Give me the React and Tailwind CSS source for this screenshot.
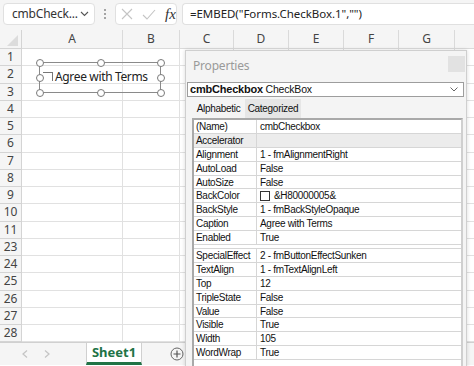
import React from "react";

const rowLabels = ["1","2","3","4","5","6","7","8","9","10","11","23","24","25","26","27","28"];

const colDefs = [
  { l: "A", cls: "w-[101px]" },
  { l: "B", cls: "w-[57px]" },
  { l: "C", cls: "w-[54px]" },
  { l: "D", cls: "w-[55px]" },
  { l: "E", cls: "w-[55px]" },
  { l: "F", cls: "w-[55px]" },
  { l: "G", cls: "w-[56px]" },
  { l: "", cls: "w-[60px]" },
];

const props1 = [
  ["(Name)", "cmbCheckbox"],
  ["Accelerator", ""],
  ["Alignment", "1 - fmAlignmentRight"],
  ["AutoLoad", "False"],
  ["AutoSize", "False"],
  ["BackColor", "&H80000005&", true],
  ["BackStyle", "1 - fmBackStyleOpaque"],
  ["Caption", "Agree with Terms"],
  ["Enabled", "True"],
];
const props2 = [
  ["SpecialEffect", "2 - fmButtonEffectSunken"],
  ["TextAlign", "1 - fmTextAlignLeft"],
  ["Top", "12"],
  ["TripleState", "False"],
  ["Value", "False"],
  ["Visible", "True"],
  ["Width", "105"],
  ["WordWrap", "True"],
];

function PropRow({ name, value, swatch, sel }) {
  return (
    <div className={"flex h-[13.9px] border-b border-[#d6d6d6] " + (sel ? "bg-[#ececec]" : "bg-white")}>
      <div className="w-[63px] shrink-0 border-r border-[#d6d6d6] pl-[2px] leading-[13px] tracking-[-0.3px] text-[#111]">{name}</div>
      <div className="flex flex-1 items-center gap-[4px] pl-[3px] leading-[13px] tracking-[-0.3px] text-[#111]">
        {swatch && <span className="inline-block h-[10px] w-[10px] border border-[#333] bg-white"></span>}
        <span>{value}</span>
      </div>
    </div>
  );
}

function Handle({ cls }) {
  return <div className={"absolute h-[8px] w-[8px] rounded-full border border-[#7a7a7a] bg-white " + cls}></div>;
}

export default function App() {
  return (
    <div className="relative h-[366px] w-[474px] overflow-hidden bg-white font-['Noto_Sans',sans-serif]">
      {/* Formula bar */}
      <div className="flex h-[30px] items-start gap-[5px] bg-[#f5f5f5] pt-[3px] pl-[3px]">
        <div className="flex h-[22px] w-[92px] items-center justify-between rounded-[4px] border border-[#e0e0e0] bg-white pl-[8px] pr-[5px]">
          <span className="text-[12px] tracking-[-0.2px] text-[#333]">cmbCheck...</span>
          <svg width="9" height="6" viewBox="0 0 9 6"><path d="M1 1 L4.5 4.5 L8 1" fill="none" stroke="#555" strokeWidth="1.1" /></svg>
        </div>
        <div className="flex h-[22px] w-[10px] flex-col items-center justify-center gap-[2px]">
          <span className="h-[2px] w-[2px] rounded-full bg-[#888]"></span>
          <span className="h-[2px] w-[2px] rounded-full bg-[#888]"></span>
          <span className="h-[2px] w-[2px] rounded-full bg-[#888]"></span>
        </div>
        <div className="flex h-[22px] w-[62px] items-center gap-[9px] rounded-[4px] border border-[#e0e0e0] bg-white pl-[5px]">
          <svg width="12" height="12" viewBox="0 0 12 12"><path d="M1 1 L11 11 M11 1 L1 11" stroke="#c4c4c4" strokeWidth="1.1" /></svg>
          <svg width="14" height="11" viewBox="0 0 14 11"><path d="M1 6 L5 10 L13 1" fill="none" stroke="#c4c4c4" strokeWidth="1.1" /></svg>
          <span className="font-['Liberation_Serif',serif] text-[15px] italic leading-none text-[#333]">fx</span>
        </div>
        <div className="flex h-[22px] flex-1 items-center rounded-l-[4px] border border-r-0 border-[#e0e0e0] bg-white pl-[7px]">
          <span className="text-[11.5px] tracking-[-0.05px] text-[#222]">=EMBED("Forms.CheckBox.1","")</span>
        </div>
      </div>

      {/* Column header */}
      <div className="flex h-[19px] bg-[#f5f5f5]">
        <div className="relative w-[22px] shrink-0 border-r border-b border-[#d4d4d4]">
          <svg className="absolute right-[3px] bottom-[2px]" width="11" height="11" viewBox="0 0 11 11"><path d="M11 0 L11 11 L0 11 Z" fill="#dcdcdc" /></svg>
        </div>
        {colDefs.map((c, i) => (
          <div key={i} className={"flex shrink-0 items-center justify-center border-r border-b border-[#dadada] text-[12px] text-[#444] " + c.cls}>{c.l}</div>
        ))}
      </div>

      {/* Rows */}
      <div className="flex flex-col">
        {rowLabels.map((r) => (
          <div key={r} className="flex h-[17.25px]">
            <div className="flex w-[22px] shrink-0 items-center justify-center border-r border-b border-[#d4d4d4] bg-[#f5f5f5] text-[12px] text-[#444]">{r}</div>
            {colDefs.map((c, i) => (
              <div key={i} className={"shrink-0 border-r border-b border-[#e1e1e1] " + c.cls}></div>
            ))}
          </div>
        ))}
      </div>

      {/* Sheet tab bar */}
      <div className="flex h-[23px] items-stretch border-t border-[#d0d0d0] bg-[#f5f5f5]">
        <div className="flex w-[86px] items-center gap-[16px] pl-[22px]">
          <svg width="6" height="8" viewBox="0 0 6 8"><path d="M5 0.5 L1 4 L5 7.5" fill="none" stroke="#c4c4c4" strokeWidth="1.2" /></svg>
          <svg width="6" height="8" viewBox="0 0 6 8"><path d="M1 0.5 L5 4 L1 7.5" fill="none" stroke="#c4c4c4" strokeWidth="1.2" /></svg>
        </div>
        <div className="flex w-[56px] items-center justify-center border-x border-[#d0d0d0] border-b-[3px] border-b-[#217346] bg-white text-[13px] font-bold text-[#217346]">Sheet1</div>
        <div className="flex flex-1 items-center pl-[28px]">
          <svg width="14" height="14" viewBox="0 0 14 14"><circle cx="7" cy="7" r="6" fill="none" stroke="#666" strokeWidth="1" /><path d="M7 3.5 V10.5 M3.5 7 H10.5" stroke="#555" strokeWidth="1.2" /></svg>
        </div>
      </div>

      {/* Checkbox control on sheet */}
      <div className="absolute left-[39px] top-[62px] h-[31px] w-[122px] border border-[#8a8a8a]">
        <div className="absolute left-[3px] top-[9px] h-[9px] w-[10px] border-t border-r border-[#777]"></div>
        <div className="absolute left-[15px] top-[4px] whitespace-nowrap text-[12px] tracking-[-0.35px] leading-[20px] text-[#222]">Agree with Terms</div>
        <Handle cls="left-[-4.5px] top-[-4.5px]" />
        <Handle cls="left-[56.5px] top-[-4.5px]" />
        <Handle cls="right-[-4.5px] top-[-4.5px]" />
        <Handle cls="left-[-4.5px] top-[10.5px]" />
        <Handle cls="right-[-4.5px] top-[10.5px]" />
        <Handle cls="left-[-4.5px] bottom-[-4.5px]" />
        <Handle cls="left-[56.5px] bottom-[-4.5px]" />
        <Handle cls="right-[-4.5px] bottom-[-4.5px]" />
      </div>

      {/* Properties window */}
      <div className="absolute left-[185px] top-[50px] flex h-[330px] w-[282px] flex-col border border-[#cfcfcf] bg-[#f4f4f4] font-['Liberation_Sans',sans-serif] text-[10px] shadow-[0_0_4px_rgba(0,0,0,0.15)]">
        <div className="flex h-[31px] items-start justify-between pl-[7px] pr-[1px]">
          <span className="mt-[6px] text-[12px] tracking-[-0.2px] text-[#9a9a9a] font-['Noto_Sans',sans-serif]">Properties</span>
          <div className="mt-[5px] h-[16px] w-[17px] bg-[#e2e2e2]"></div>
        </div>
        <div className="mx-[1px] mr-[2px] flex h-[15px] items-center justify-between border border-[#9d9d9d] bg-white pl-[2px] pr-[5px]">
          <span className="tracking-[-0.2px] text-[#111]"><b className="text-[11px]">cmbCheckbox</b> <span className="text-[10.5px]">CheckBox</span></span>
          <svg width="8" height="5" viewBox="0 0 8 5"><path d="M0.5 0.5 L4 4 L7.5 0.5" fill="none" stroke="#666" strokeWidth="1" /></svg>
        </div>
        <div className="flex h-[21px] items-end pl-[6px]">
          <div className="flex h-[20px] w-[53px] items-center justify-center tracking-[-0.3px] text-[#111]">Alphabetic</div>
          <div className="flex h-[19px] w-[56px] items-center justify-center bg-[#e6e6e6] tracking-[-0.3px] text-[#111]">Categorized</div>
        </div>
        <div className="ml-[6px] mr-[3px] flex-1 border-2 border-[#a9a9a9] border-r-[#cfcfcf] bg-white">
          {props1.map((p, i) => (
            <PropRow key={p[0]} name={p[0]} value={p[1]} swatch={p[2]} sel={i === 1} />
          ))}
          <div className="h-[4px] border-b border-[#d6d6d6] bg-white"></div>
          {props2.map((p) => (
            <PropRow key={p[0]} name={p[0]} value={p[1]} />
          ))}
        </div>
      </div>
    </div>
  );
}
